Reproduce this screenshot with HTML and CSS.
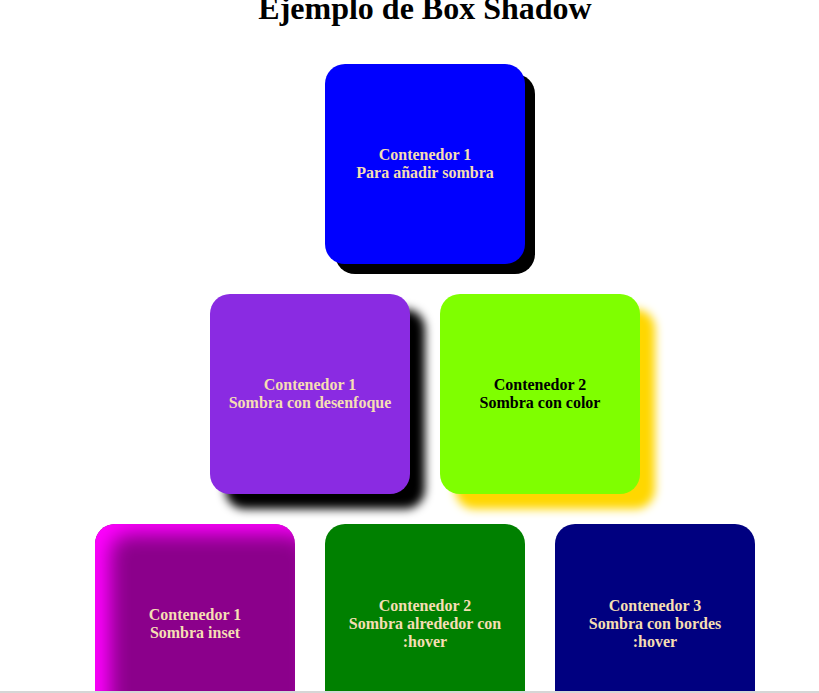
FILE: index.html
```html
<!DOCTYPE html>
<html lang="es">
<head>
<meta charset="utf-8">
<title>Ejemplo de Box Shadow</title>
<link rel="stylesheet" href="styles.css">
</head>
<body>
<div class="page">
  <h1 class="title">Ejemplo de Box Shadow</h1>
  <div class="rows">
    <div class="row">
      <div class="box box-blue">Contenedor 1<br>Para añadir sombra</div>
    </div>
    <div class="row">
      <div class="box box-violet">Contenedor 1<br>Sombra con desenfoque</div>
      <div class="box box-lime">Contenedor 2<br>Sombra con color</div>
    </div>
    <div class="row">
      <div class="box box-inset">Contenedor 1<br>Sombra inset</div>
      <div class="box box-green">Contenedor 2<br>Sombra alrededor con :hover</div>
      <div class="box box-navy">Contenedor 3<br>Sombra con bordes :hover</div>
    </div>
  </div>
</div>
<div class="scrollbar"></div>
</body>
</html>
```

FILE: styles.css
```css
html, body {
  margin: 0;
  padding: 0;
  overflow: hidden;
  background: #ffffff;
}

body {
  font-family: "Liberation Serif", "Times New Roman", serif;
}

.page {
  width: 850px;
}

.title {
  margin: -10px 0 0;
  font-size: 32px;
  font-weight: bold;
  text-align: center;
  color: #000;
}

.rows {
  display: flex;
  flex-direction: column;
  gap: 30px;
  padding-top: 37px;
}

.row {
  display: flex;
  justify-content: center;
  gap: 30px;
}

.box {
  width: 200px;
  height: 200px;
  box-sizing: border-box;
  padding: 10px;
  border-radius: 20px;
  display: flex;
  align-items: center;
  justify-content: center;
  text-align: center;
  font-size: 16px;
  font-weight: bold;
  color: wheat;
}

.box-blue {
  background: #0000ff;
  box-shadow: 10px 10px 0 #000;
}

.box-violet {
  background: #8a2be2;
  box-shadow: 15px 15px 10px #000;
}

.box-lime {
  background: #7fff00;
  color: #000;
  box-shadow: 15px 15px 10px #ffd700;
}

.box-inset {
  background: #8b008b;
  box-shadow: inset 15px 10px 20px #ff00ff;
}

.box-green {
  background: #008000;
}

.box-navy {
  background: #000080;
}

.scrollbar {
  position: fixed;
  left: 0;
  right: 0;
  bottom: 0;
  height: 2px;
  background: #d6d6d6;
}
```
